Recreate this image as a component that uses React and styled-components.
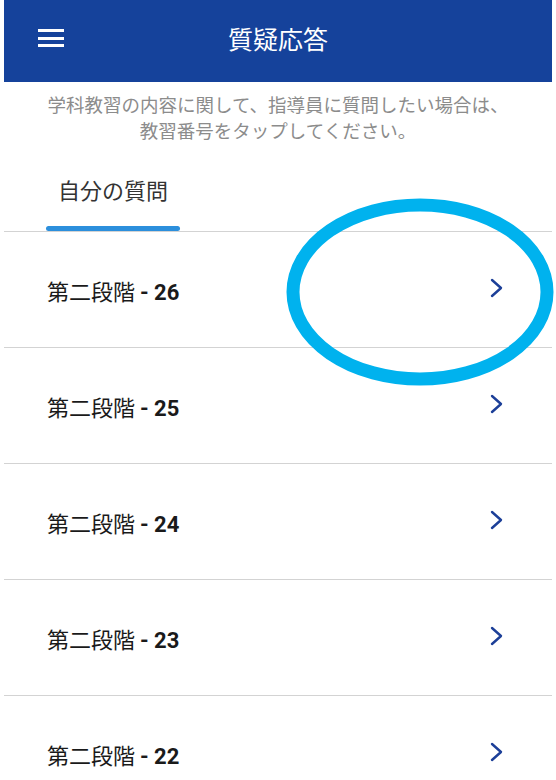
import React from 'react';
import styled, { createGlobalStyle } from 'styled-components';

const GlobalStyle = createGlobalStyle`
    html, body {
        margin: 0;
        padding: 0;
        background: #ffffff;
        overflow: hidden;
        font-family: Roboto, "Noto Sans CJK JP", sans-serif;
    }
`

const Screen = styled.div`
    position: relative;
    margin: 0 4px;
    height: 780px;
    background: #ffffff;
`

const Header = styled.div`
    height: 82px;
    background: #15429b;
    display: flex;
    align-items: center;
    position: relative;
`

const MenuButton = styled.div`
    width: 26px;
    height: 18px;
    margin-left: 34px;
    margin-top: -6px;
    display: flex;
    flex-direction: column;
    justify-content: space-between;
    > span {
        display: block;
        height: 3px;
        background: #ffffff;
    }
`

const Title = styled.div`
    position: absolute;
    left: 0;
    right: 0;
    top: 21px;
    text-align: center;
    color: #ffffff;
    font-family: "Noto Sans CJK JP", sans-serif;
    font-size: 25px;
    line-height: 34px;
    pointer-events: none;
`

const Notice = styled.p`
    margin: 0;
    padding-top: 9px;
    text-align: center;
    color: #8c8c8c;
    font-family: "Noto Sans CJK JP", sans-serif;
    font-size: 18.5px;
    line-height: 26px;
`

const Tabs = styled.div`
    height: 88px;
    display: flex;
    align-items: stretch;
    padding-left: 42px;
    border-bottom: 1px solid #d3d3d3;
`

const Tab = styled.div`
    width: 134px;
    display: flex;
    flex-direction: column;
    justify-content: flex-end;
    align-items: center;
    color: #333333;
    font-family: "Noto Sans CJK JP", sans-serif;
    font-size: 22px;
    line-height: 30px;
    > span {
        margin-bottom: 22px;
    }
    &::after {
        content: '';
        display: block;
        align-self: stretch;
        height: 5px;
        border-radius: 3px;
        background: ${p => (p.$active ? '#2c8fdc' : 'transparent')};
    }
`

const Row = styled.div`
    height: 116px;
    display: flex;
    align-items: center;
    justify-content: space-between;
    padding: 0 48px 0 43px;
    box-sizing: border-box;
    border-bottom: 1px solid #d3d3d3;
`

const RowLabel = styled.div`
    font-size: 22px;
    color: #1a1a1a;
    font-family: "Noto Sans CJK JP", sans-serif;
    > b {
        font-family: Roboto, sans-serif;
        font-weight: 700;
    }
`

const Chevron = styled.svg`
    width: 14px;
    height: 22px;
    margin-top: -4px;
`

const Highlight = styled.svg`
    position: absolute;
    left: 278px;
    top: 195px;
    width: 278px;
    height: 195px;
    pointer-events: none;
`

const items = [26, 25, 24, 23, 22]

function App() {
    return (
        <Screen>
            <GlobalStyle />
            <Header>
                <MenuButton>
                    <span />
                    <span />
                    <span />
                </MenuButton>
                <Title>質疑応答</Title>
            </Header>
            <Notice>
                学科教習の内容に関して、指導員に質問したい場合は、
                <br />
                教習番号をタップしてください。
            </Notice>
            <Tabs>
                <Tab $active>
                    <span>自分の質問</span>
                </Tab>
            </Tabs>
            {items.map(n => (
                <Row key={n}>
                    <RowLabel>
                        第二段階 <b>- {n}</b>
                    </RowLabel>
                    <Chevron viewBox="0 0 14 22">
                        <path d="M2 3 L11 11 L2 19" fill="none" stroke="#1c3f98" strokeWidth="2.4" strokeLinecap="round" strokeLinejoin="round" />
                    </Chevron>
                </Row>
            ))}
            <Highlight viewBox="0 0 278 195">
                <ellipse cx="138" cy="97" rx="127" ry="87" fill="none" stroke="#00b2ee" strokeWidth="13" />
            </Highlight>
        </Screen>
    )
}

export default App
